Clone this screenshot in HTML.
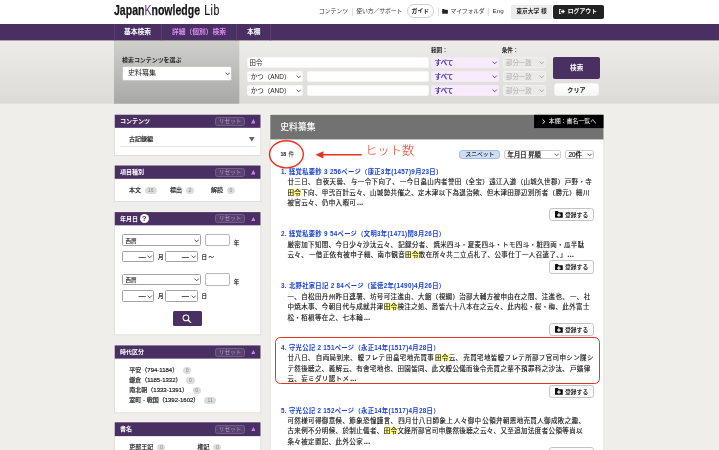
<!DOCTYPE html>
<html lang="ja">
<head>
<meta charset="utf-8">
<title>JapanKnowledge Lib</title>
<style>
*{box-sizing:border-box;margin:0;padding:0}
html,body{width:719px;height:450px;overflow:hidden}
body{position:relative;background:#efeeea;font-family:"Liberation Sans","Noto Sans CJK JP",sans-serif;color:#222;font-size:6px;line-height:1}
#wrap{position:absolute;left:0;top:0;width:719px;height:450px;will-change:transform}
.a{position:absolute;white-space:nowrap}
.b{font-weight:bold}
#hd{left:0;top:0;width:719px;height:24px;background:#fff}
.ht{top:6px;height:10px;line-height:10px;font-size:5.9px;color:#333}
.vs{top:8px;width:1px;height:8px;background:#dedede}
#nav{left:0;top:24px;width:719px;height:16.5px;background:#4a2f63}
.nv{top:24px;height:16.5px;line-height:16.5px;font-size:6.75px;font-weight:bold;color:#fff}
.ns{top:24px;width:1px;height:16.5px;background:#5e4576}
#band{left:0;top:40.5px;width:719px;height:63.5px;background:linear-gradient(#edece8,#dcdbd8)}
#blk{left:114px;top:40.5px;width:125px;height:63.5px;background:linear-gradient(#d0d0cd,#a8a8a6)}
.sel{background:#fff;border:1px solid #f7f6f4;border-radius:2px;font-size:6.5px;color:#222;overflow:hidden}
.sel span{position:absolute;left:3px;top:0}
.chev{position:absolute;right:0.6px;top:50%;width:5.4px;height:3.4px;margin-top:-1.4px}
.inp{background:#fff;border:1px solid #f7f6f4;border-radius:2px}
.ph{left:114.3px;width:146.3px;height:13.5px;background:#4a2f63}
.pb{left:114.3px;width:146.3px;background:#fff;border:1px solid #dcdbd8;border-top:none}
.pt{left:120px;font-size:6px;font-weight:bold;color:#fff;height:12px;line-height:12px}
.rs{left:215.3px;width:29.7px;height:9px;border:1px solid #725e88;border-radius:2.5px;background:#584070;color:#b2a3c3;font-size:5.7px;line-height:7px;text-align:center}
.tri{left:250.7px;width:4.8px;height:4.4px}
.it{font-size:6px;height:8px;line-height:8px;color:#1a1a1a;-webkit-text-stroke:0.18px #1a1a1a}
.bd{height:7px;border-radius:3.5px;background:#dddddb;color:#8a8a8a;font-size:5px;line-height:7px;text-align:center}
.sb .sel{border-color:#a2a2a2;border-radius:1.5px}
.rt{left:281px;font-size:6.3px;letter-spacing:0.31px;font-weight:bold;color:#1a40d6;height:10px;line-height:10px}
.rl{left:287.5px;font-size:6.5px;letter-spacing:0.37px;word-spacing:-1.37px;color:#111;-webkit-text-stroke:0.12px #111;height:10px;line-height:10px}
.hl{background:#ffff8a}
.reg{left:549.4px;width:44.2px;height:13.2px;border:1px solid #c4c4c4;border-radius:2.8px;background:#fbfbfb}
.reg span{position:absolute;left:14.6px;top:1px;height:11.2px;line-height:11.2px;font-size:5.8px;font-weight:bold;color:#2a2a2a}
.reg svg{position:absolute;left:4.8px;top:2.2px;width:7.8px;height:6.8px}
</style>
</head>
<body>
<div id="wrap">
<svg class="a" style="left:0;top:0;width:719px;height:450px" viewBox="0 0 719 450"><defs><linearGradient id="g1" x1="0" y1="0" x2="0" y2="1"><stop offset="0" stop-color="#edece8"/><stop offset="1" stop-color="#dcdbd8"/></linearGradient><linearGradient id="g2" x1="0" y1="0" x2="0" y2="1"><stop offset="0" stop-color="#d0d0cd"/><stop offset="1" stop-color="#a8a8a6"/></linearGradient></defs><rect x="0" y="0" width="719" height="24" fill="#fff"/><rect x="0" y="40" width="719" height="63.7" fill="url(#g1)"/><rect x="114" y="40" width="125.3" height="63.7" fill="url(#g2)"/><rect x="0" y="24" width="719" height="16.4" fill="#4a2f63"/><rect x="114" y="24" width="0.8" height="16.4" fill="#5e4576"/><rect x="161" y="24" width="0.8" height="16.4" fill="#5e4576"/><rect x="236" y="24" width="0.8" height="16.4" fill="#5e4576"/><rect x="270" y="24" width="0.8" height="16.4" fill="#5e4576"/><rect x="114" y="127.8" width="147.2" height="28.0" fill="#dcdad6"/><rect x="114.8" y="127.8" width="145.6" height="27.2" fill="#fff"/><rect x="114" y="114.0" width="147.3" height="13.8" fill="#f6f5f2"/><rect x="114.7" y="114.7" width="145.8" height="13.1" fill="#4a2f63"/><rect x="114" y="178.8" width="147.2" height="23.0" fill="#dcdad6"/><rect x="114.8" y="178.8" width="145.6" height="22.2" fill="#fff"/><rect x="114" y="164.8" width="147.3" height="14.0" fill="#f6f5f2"/><rect x="114.7" y="165.5" width="145.8" height="13.3" fill="#4a2f63"/><rect x="114" y="225.3" width="147.2" height="109.9" fill="#dcdad6"/><rect x="114.8" y="225.3" width="145.6" height="109.1" fill="#fff"/><rect x="114" y="211.4" width="147.3" height="13.9" fill="#f6f5f2"/><rect x="114.7" y="212.1" width="145.8" height="13.2" fill="#4a2f63"/><rect x="114" y="358.6" width="147.2" height="54.6" fill="#dcdad6"/><rect x="114.8" y="358.6" width="145.6" height="53.8" fill="#fff"/><rect x="114" y="344.7" width="147.3" height="13.9" fill="#f6f5f2"/><rect x="114.7" y="345.4" width="145.8" height="13.2" fill="#4a2f63"/><rect x="114" y="436.1" width="147.2" height="26.7" fill="#dcdad6"/><rect x="114.8" y="436.1" width="145.6" height="25.9" fill="#fff"/><rect x="114" y="421.6" width="147.3" height="14.5" fill="#f6f5f2"/><rect x="114.7" y="422.3" width="145.8" height="13.8" fill="#4a2f63"/><rect x="269.8" y="139" width="334.5" height="320" fill="#dcdad6"/><rect x="270.6" y="139" width="332.9" height="320" fill="#fff"/><rect x="269.6" y="114.1" width="334.8" height="25.3" fill="#f6f5f2"/><rect x="270.3" y="114.8" width="333.2" height="24.6" fill="#727272"/><rect x="534.1" y="114.8" width="69.4" height="13.3" fill="#000"/></svg>
<div class="a" id="logo" style="left:114.3px;top:1.4px;height:18px;line-height:18px;font-size:14.2px;color:#161616;transform:scaleX(0.742);transform-origin:0 0"><span style="font-weight:bold;-webkit-text-stroke:0.25px #161616">Japan</span><span style="color:#5a2d82">K</span><span style="font-weight:bold;-webkit-text-stroke:0.25px #161616">nowledge</span><span style="margin-left:5.6px;letter-spacing:0.7px;-webkit-text-stroke:0.15px #161616">Lib</span></div>
<div class="a ht" style="left:318.8px">コンテンツ</div>
<div class="a vs" style="left:352px"></div>
<div class="a ht" style="left:356.3px;letter-spacing:-0.15px">使い方／サポート</div>
<div class="a" style="left:407px;top:4px;width:27px;height:14px;border:1px solid #cfcfcf;border-radius:7px;background:#fff"></div>
<div class="a ht b" style="left:411.6px;color:#222">ガイド</div>
<div class="a vs" style="left:437.6px"></div>
<svg class="a" style="left:442.2px;top:9px;width:6px;height:4.8px" viewBox="0 0 12 10"><path d="M0 1.2Q0 0 1.2 0H4.2L5.6 1.6H10.8Q12 1.6 12 2.8V8.8Q12 10 10.8 10H1.2Q0 10 0 8.8Z" fill="#222"/></svg>
<div class="a ht" style="left:450.6px;letter-spacing:-0.25px">マイフォルダ</div>
<div class="a vs" style="left:488px"></div>
<div class="a ht" style="left:492.6px;font-size:6.2px">Eng</div>
<div class="a" style="left:510.6px;top:4.8px;width:41.8px;height:13.8px;background:#ededed"></div>
<div class="a ht b" style="left:516.2px;color:#222;font-size:5.8px">東京大学 様</div>
<div class="a" style="left:553.2px;top:4.8px;width:50.8px;height:14px;background:#222;border-radius:2px"></div>
<svg class="a" style="left:559.4px;top:9px;width:6px;height:5px" viewBox="0 0 12 10"><path d="M4.5 0H1.2Q0 0 0 1.2V8.8Q0 10 1.2 10H4.5V8.4H1.6V1.6H4.5Z" fill="#fff"/><path d="M7.2 0.6L12 5L7.2 9.4V6.6H3.6V3.4H7.2Z" fill="#fff"/></svg>
<div class="a ht b" style="left:567.7px;color:#fff">ログアウト</div>
<div class="a nv" style="left:124px">基本検索</div>
<div class="a nv" style="left:172px;color:#d88fec">詳細（個別）検索</div>
<div class="a nv" style="left:247px">本棚</div>
<div class="a b" style="left:122px;top:55.8px;height:9px;line-height:9px;font-size:5.95px;color:#222">検索コンテンツを選ぶ</div>
<div class="a sel" style="left:122px;top:66.3px;width:110px;height:14.4px;line-height:12.4px;border-color:#c9c9c7"><span style="left:5px;font-size:7px">史料纂集</span><svg class="chev" viewBox="0 0 10 6"><path d="M1 1L5 5L9 1" fill="none" stroke="#3a3a3a" stroke-width="1.6"/></svg></div>
<div class="a inp" style="left:246.7px;top:57.3px;width:182px;height:10.6px"></div>
<div class="a" style="left:249.5px;top:58px;height:10.6px;line-height:10.6px;font-size:6.4px">田令</div>
<div class="a sel" style="left:246.7px;top:71.3px;width:56px;height:11px;line-height:9px;"><span style="">かつ（AND）</span><svg class="chev" viewBox="0 0 10 6"><path d="M1 1L5 5L9 1" fill="none" stroke="#3a3a3a" stroke-width="1.6"/></svg></div>
<div class="a inp" style="left:306.7px;top:71.3px;width:122px;height:11px"></div>
<div class="a sel" style="left:246.7px;top:85.3px;width:56px;height:11px;line-height:9px;"><span style="">かつ（AND）</span><svg class="chev" viewBox="0 0 10 6"><path d="M1 1L5 5L9 1" fill="none" stroke="#3a3a3a" stroke-width="1.6"/></svg></div>
<div class="a inp" style="left:306.7px;top:85.3px;width:122px;height:11px"></div>
<div class="a b" style="left:431px;top:45.7px;height:8px;line-height:8px;font-size:5.6px;color:#222">範囲：</div>
<div class="a b" style="left:501.7px;top:45.7px;height:8px;line-height:8px;font-size:5.6px;color:#222">条件：</div>
<div class="a sel" style="left:431.3px;top:57.3px;width:68px;height:11px;line-height:9px;background:#f8ebfd;color:#3528a0;border-color:#f3e9f8;font-size:6.4px;font-weight:500;-webkit-text-stroke:0.15px #3528a0"><span style="left:2.4px">すべて</span><svg class="chev" viewBox="0 0 10 6"><path d="M1 1L5 5L9 1" fill="none" stroke="#3b2ea6" stroke-width="1.6"/></svg></div>
<div class="a sel" style="left:502.7px;top:57.3px;width:43px;height:11px;line-height:9px;background:#ebeae8;color:#adadad;border-color:#f1f0ee;font-size:6.4px"><span style="left:2.4px">部分一致</span><svg class="chev" viewBox="0 0 10 6"><path d="M1 1L5 5L9 1" fill="none" stroke="#999" stroke-width="1.6"/></svg></div>
<div class="a sel" style="left:431.3px;top:71.3px;width:68px;height:11px;line-height:9px;background:#f8ebfd;color:#3528a0;border-color:#f3e9f8;font-size:6.4px;font-weight:500;-webkit-text-stroke:0.15px #3528a0"><span style="left:2.4px">すべて</span><svg class="chev" viewBox="0 0 10 6"><path d="M1 1L5 5L9 1" fill="none" stroke="#3b2ea6" stroke-width="1.6"/></svg></div>
<div class="a sel" style="left:502.7px;top:71.3px;width:43px;height:11px;line-height:9px;background:#ebeae8;color:#adadad;border-color:#f1f0ee;font-size:6.4px"><span style="left:2.4px">部分一致</span><svg class="chev" viewBox="0 0 10 6"><path d="M1 1L5 5L9 1" fill="none" stroke="#999" stroke-width="1.6"/></svg></div>
<div class="a sel" style="left:431.3px;top:85.3px;width:68px;height:11px;line-height:9px;background:#f8ebfd;color:#3528a0;border-color:#f3e9f8;font-size:6.4px;font-weight:500;-webkit-text-stroke:0.15px #3528a0"><span style="left:2.4px">すべて</span><svg class="chev" viewBox="0 0 10 6"><path d="M1 1L5 5L9 1" fill="none" stroke="#3b2ea6" stroke-width="1.6"/></svg></div>
<div class="a sel" style="left:502.7px;top:85.3px;width:43px;height:11px;line-height:9px;background:#ebeae8;color:#adadad;border-color:#f1f0ee;font-size:6.4px"><span style="left:2.4px">部分一致</span><svg class="chev" viewBox="0 0 10 6"><path d="M1 1L5 5L9 1" fill="none" stroke="#999" stroke-width="1.6"/></svg></div>
<div class="a b" style="left:553.3px;top:57px;width:46.7px;height:22.3px;line-height:22.3px;background:#4a2f63;border-radius:2px;color:#fff;font-size:6.6px;text-align:center">検索</div>
<div class="a b" style="left:553.7px;top:83px;width:45.6px;height:13px;line-height:11.4px;background:linear-gradient(#fff,#f6f6f5);border:1px solid #f3f3f1;border-radius:2.5px;color:#111;font-size:6.1px;text-align:center">クリア</div>
<div class="sb">
<div class="a pt" style="top:115.10000000000001px">コンテンツ</div>
<div class="a rs" style="top:117px">リセット</div>
<svg class="a tri" style="top:119.4px" viewBox="0 0 48 44"><path d="M24 0L48 44H0Z" fill="#c77dff"/></svg>
<div class="a it" style="left:129px;top:135.2px;">古記録編</div>
<svg class="a" style="left:249.1px;top:137.2px;width:5.6px;height:4.8px" viewBox="0 0 56 48"><path d="M0 0H56L28 48Z" fill="#666"/></svg>
<div class="a" style="left:119.7px;top:146px;width:136.2px;height:1px;background:#e6e6e6"></div>
<div class="a pt" style="top:165.89999999999998px">項目種別</div>
<div class="a rs" style="top:168px">リセット</div>
<svg class="a tri" style="top:170.2px" viewBox="0 0 48 44"><path d="M24 0L48 44H0Z" fill="#c77dff"/></svg>
<div class="a it" style="left:129px;top:186px;">本文</div>
<div class="a bd" style="left:145px;top:186.7px;width:11.6px">16</div>
<div class="a it" style="left:170px;top:186px;">標出</div>
<div class="a bd" style="left:185.6px;top:186.7px;width:8.4px">2</div>
<div class="a it" style="left:210.9px;top:186px;">解読</div>
<div class="a bd" style="left:226.5px;top:186.7px;width:8.6px">0</div>
<div class="a pt" style="top:212.5px">年月日</div>
<div class="a rs" style="top:214px">リセット</div>
<svg class="a tri" style="top:216.8px" viewBox="0 0 48 44"><path d="M24 0L48 44H0Z" fill="#c77dff"/></svg>
<div class="a b" style="left:139.6px;top:214.1px;width:9.2px;height:9.2px;border-radius:50%;background:#fff;color:#2a1a3a;font-size:7.4px;line-height:9.2px;text-align:center">?</div>
<div class="a sel" style="left:122px;top:234.3px;width:78.6px;height:11.6px;line-height:9.6px;font-size:5.5px;font-weight:500"><span style="left:2.4px;top:1.3px">西暦</span><svg class="chev" viewBox="0 0 10 6"><path d="M1 1L5 5L9 1" fill="none" stroke="#3a3a3a" stroke-width="1.6"/></svg></div>
<div class="a inp" style="left:205px;top:233.9px;width:24.8px;height:12.4px;border-color:#b8b8b8"></div>
<div class="a it" style="left:233.8px;top:238.5px;font-size:5.5px">年</div>
<div class="a sel" style="left:122px;top:251.10000000000002px;width:32.4px;height:11.4px;line-height:9.4px;font-size:7.2px;font-weight:bold"><span style="left:15.4px">—</span><svg class="chev" viewBox="0 0 10 6"><path d="M1 1L5 5L9 1" fill="none" stroke="#3a3a3a" stroke-width="1.6"/></svg></div>
<div class="a it" style="left:158px;top:252.8px;font-size:5.5px">月</div>
<div class="a sel" style="left:165px;top:251.10000000000002px;width:33px;height:11.4px;line-height:9.4px;font-size:7.2px;font-weight:bold"><span style="left:15.8px">—</span><svg class="chev" viewBox="0 0 10 6"><path d="M1 1L5 5L9 1" fill="none" stroke="#3a3a3a" stroke-width="1.6"/></svg></div>
<div class="a it" style="left:201.6px;top:252.8px;font-size:5.5px">日 〜</div>
<div class="a sel" style="left:122px;top:273.6px;width:78.6px;height:11.6px;line-height:9.6px;font-size:5.5px;font-weight:500"><span style="left:2.4px;top:1.3px">西暦</span><svg class="chev" viewBox="0 0 10 6"><path d="M1 1L5 5L9 1" fill="none" stroke="#3a3a3a" stroke-width="1.6"/></svg></div>
<div class="a inp" style="left:205px;top:273.20000000000005px;width:24.8px;height:12.4px;border-color:#b8b8b8"></div>
<div class="a it" style="left:233.8px;top:277.8px;font-size:5.5px">年</div>
<div class="a sel" style="left:122px;top:290.40000000000003px;width:32.4px;height:11.4px;line-height:9.4px;font-size:7.2px;font-weight:bold"><span style="left:15.4px">—</span><svg class="chev" viewBox="0 0 10 6"><path d="M1 1L5 5L9 1" fill="none" stroke="#3a3a3a" stroke-width="1.6"/></svg></div>
<div class="a it" style="left:158px;top:292.1px;font-size:5.5px">月</div>
<div class="a sel" style="left:165px;top:290.40000000000003px;width:33px;height:11.4px;line-height:9.4px;font-size:7.2px;font-weight:bold"><span style="left:15.8px">—</span><svg class="chev" viewBox="0 0 10 6"><path d="M1 1L5 5L9 1" fill="none" stroke="#3a3a3a" stroke-width="1.6"/></svg></div>
<div class="a it" style="left:201.6px;top:292.1px;font-size:5.5px">日</div>
<div class="a" style="left:173.2px;top:311.3px;width:29px;height:14.5px;background:#4a2f63;border-radius:1.5px"></div>
<svg class="a" style="left:182.4px;top:313.8px;width:9.6px;height:9.6px" viewBox="0 0 18 18"><circle cx="7.4" cy="7.4" r="5.4" fill="none" stroke="#fff" stroke-width="1.9"/><path d="M11.4 11.4L16.4 16.4" stroke="#fff" stroke-width="2.5" stroke-linecap="round"/></svg>
<div class="a pt" style="top:345.8px">時代区分</div>
<div class="a rs" style="top:348px">リセット</div>
<svg class="a tri" style="top:350.1px" viewBox="0 0 48 44"><path d="M24 0L48 44H0Z" fill="#c77dff"/></svg>
<div class="a it" style="left:129.3px;top:366px;">平安（794-1184）</div>
<div class="a bd" style="left:183px;top:366.7px;width:8.2px">0</div>
<div class="a it" style="left:129.3px;top:376.1px;">鎌倉（1185-1332）</div>
<div class="a bd" style="left:186.4px;top:376.8px;width:8.2px">0</div>
<div class="a it" style="left:129.3px;top:386.2px;">南北朝（1333-1391）</div>
<div class="a bd" style="left:192.5px;top:386.9px;width:8.2px">0</div>
<div class="a it" style="left:129.3px;top:396.3px;">室町 - 戦国（1392-1602）</div>
<div class="a bd" style="left:204px;top:397px;width:12.2px">11</div>
<div class="a pt" style="top:422.7px">書名</div>
<div class="a rs" style="top:425px">リセット</div>
<svg class="a tri" style="top:427.0px" viewBox="0 0 48 44"><path d="M24 0L48 44H0Z" fill="#c77dff"/></svg>
<div class="a it" style="left:129.3px;top:443.2px;">吏部王記</div>
<div class="a bd" style="left:157.3px;top:443.9px;width:8px">0</div>
<div class="a it" style="left:197.4px;top:443.2px;">権記</div>
<div class="a bd" style="left:213.3px;top:443.9px;width:8.2px">0</div>
</div>
<div class="a" style="left:280.3px;top:121px;height:12px;line-height:12px;font-size:8.8px;font-weight:500;color:#fff">史料纂集</div>
<svg class="a" style="left:541.6px;top:119.4px;width:3.6px;height:5.2px" viewBox="0 0 7 10"><path d="M1.2 1L5.6 5L1.2 9" fill="none" stroke="#fff" stroke-width="1.9"/></svg>
<div class="a" style="left:548.7px;top:117.4px;height:9px;line-height:9px;font-size:5.95px;color:#fff">本棚：書名一覧へ</div>
<svg class="a" style="left:266px;top:136px;width:160px;height:36px" viewBox="0 0 160 36"><ellipse cx="20.4" cy="18.3" rx="16.9" ry="13.6" fill="none" stroke="#e8331f" stroke-width="1.4"/><path d="M56 18.8H95.8" stroke="#e8331f" stroke-width="1.5" fill="none"/><path d="M49.3 18.8L57.4 15.2V22.4Z" fill="#e8331f"/></svg>
<div class="a" style="left:280.4px;top:150px;height:9px;line-height:9px;font-size:5.5px;color:#111"><span class="b" style="font-size:5.3px;letter-spacing:-0.2px">18</span><span style="margin-left:2.6px">件</span></div>
<div class="a" style="left:365.4px;top:142px;height:18px;line-height:18px;font-size:12.2px;font-weight:300;color:#e8331f">ヒット数</div>
<div class="a" style="left:459.4px;top:150.3px;width:41px;height:9px;line-height:7px;background:#cbddf7;border:1px solid #a9bde0;border-radius:3px;font-size:5.8px;color:#222;text-align:center;font-weight:500">スニペット</div>
<div class="a sel" style="left:504.3px;top:150.3px;width:56.6px;height:9px;line-height:7px;font-size:6.3px;overflow:visible;border-color:#cdcdcd;color:#111;font-weight:500;-webkit-text-stroke:0.15px #111"><span style="left:2.3px;top:0px">年月日 昇順</span><svg class="chev" viewBox="0 0 10 6"><path d="M1 1L5 5L9 1" fill="none" stroke="#3a3a3a" stroke-width="1.6"/></svg></div>
<div class="a sel" style="left:565.3px;top:150.3px;width:28.8px;height:9px;line-height:7px;font-size:6.3px;overflow:visible;border-color:#cdcdcd;color:#111;font-weight:500;-webkit-text-stroke:0.15px #111"><span style="left:2.3px;top:0px">20件</span><svg class="chev" viewBox="0 0 10 6"><path d="M1 1L5 5L9 1" fill="none" stroke="#3a3a3a" stroke-width="1.6"/></svg></div>
<div class="a" style="left:275.4px;top:337.4px;width:325px;height:46.4px;border:1.1px solid #e8331f;border-radius:5.5px"></div>
<div class="a rt" style="top:166.8px">1. 経覚私要鈔 3 256ページ（康正3年(1457)9月23日）</div>
<div class="a rl" style="top:177.2px">廿三日、 自夜天曇、 与一令下向了、 一今日畠山内者誉田（全宝）遠江入道（山城久世郡）戸野・寺</div>
<div class="a rl" style="top:187.7px"><span class="hl">田令</span>下向、甲弐百計云々、山城勢共催之、定木津以下為退治歟、但木津田那辺別所者（勝元）細川</div>
<div class="a rl" style="top:198.2px">被官云々、仍申入暇可 <b>...</b></div>
<div class="a reg" style="top:208.3px"><svg viewBox="0 0 78 66" preserveAspectRatio="none"><path d="M0 6Q0 0 6 0H28L37 11H72Q78 11 78 17V60Q78 66 72 66H6Q0 66 0 60Z" fill="#111"/><path d="M39 21V57M21 39H57" stroke="#fff" stroke-width="12"/></svg><span>登録する</span></div>
<div class="a rt" style="top:229.1px">2. 経覚私要鈔 9 54ページ（文明3年(1471)閏8月26日）</div>
<div class="a rl" style="top:239.5px">厳密加下知間、今日少々沙汰云々、 記録分者、 焼米四斗・夏麦四斗・トモ四斗・粧四両・瓜半駄</div>
<div class="a rl" style="top:250.0px">云々、 一借正依有被申子細、南市観音<span class="hl">田令</span>散在所々共二立点札了、公事仕丁一人召遣了、」 <b>...</b></div>
<div class="a reg" style="top:260.4px"><svg viewBox="0 0 78 66" preserveAspectRatio="none"><path d="M0 6Q0 0 6 0H28L37 11H72Q78 11 78 17V60Q78 66 72 66H6Q0 66 0 60Z" fill="#111"/><path d="M39 21V57M21 39H57" stroke="#fff" stroke-width="12"/></svg><span>登録する</span></div>
<div class="a rt" style="top:281.4px">3. 北野社家日記 2 84ページ（延徳2年(1490)4月26日）</div>
<div class="a rl" style="top:291.8px">一、自松田丹州昨日連署、坊号可注進由、大館（視綱）治部大輔方被申由在之間、注進也、 一、社</div>
<div class="a rl" style="top:302.3px">中焼木事、今朝目代与成就井津<span class="hl">田令</span>検注之処、悉皆六十八本在之云々、此内松・桜・梅、此外富士</div>
<div class="a rl" style="top:312.8px">松・栢槇等在之、七本輪 <b>...</b></div>
<div class="a reg" style="top:322.6px"><svg viewBox="0 0 78 66" preserveAspectRatio="none"><path d="M0 6Q0 0 6 0H28L37 11H72Q78 11 78 17V60Q78 66 72 66H6Q0 66 0 60Z" fill="#111"/><path d="M39 21V57M21 39H57" stroke="#fff" stroke-width="12"/></svg><span>登録する</span></div>
<div class="a rt" style="top:343px">4. 守光公記 2 151ページ（永正14年(1517)4月28日）</div>
<div class="a rl" style="top:353.4px">廿八日、 自両局到来、 綏フレテ 田畠宅地売買事 <span class="hl">田令</span>云、 売買宅地皆綏フレテ所部フ官司申シン牒シ</div>
<div class="a rl" style="top:363.9px">テ然後聴之、義解云、有舎宅地也、田園皆同、此文綏公儀而後令売買之輩不預罪科之沙汰、 戸婚律</div>
<div class="a rl" style="top:374.4px">云、妄ミダリ認トメ <b>...</b></div>
<div class="a reg" style="top:385px"><svg viewBox="0 0 78 66" preserveAspectRatio="none"><path d="M0 6Q0 0 6 0H28L37 11H72Q78 11 78 17V60Q78 66 72 66H6Q0 66 0 60Z" fill="#111"/><path d="M39 21V57M21 39H57" stroke="#fff" stroke-width="12"/></svg><span>登録する</span></div>
<div class="a rt" style="top:405.5px">5. 守光公記 2 152ページ（永正14年(1517)4月28日）</div>
<div class="a rl" style="top:415.9px">可然様可得御意候、節象恐惶謹言、 四月廿八日師象上 人々御中 公領弁朝恩地売買人御成敗之趣、</div>
<div class="a rl" style="top:426.4px">古来例不分明候、於制止儀者、<span class="hl">田令</span>文経所部官司申牒然後聴之云々、又至追加法度者公領等尚以</div>
<div class="a rl" style="top:436.9px">条々被定置記、此外公家 <b>...</b></div>
<div class="a reg" style="top:446.8px"><svg viewBox="0 0 78 66" preserveAspectRatio="none"><path d="M0 6Q0 0 6 0H28L37 11H72Q78 11 78 17V60Q78 66 72 66H6Q0 66 0 60Z" fill="#111"/><path d="M39 21V57M21 39H57" stroke="#fff" stroke-width="12"/></svg><span>登録する</span></div>
</div>
</body>
</html>
